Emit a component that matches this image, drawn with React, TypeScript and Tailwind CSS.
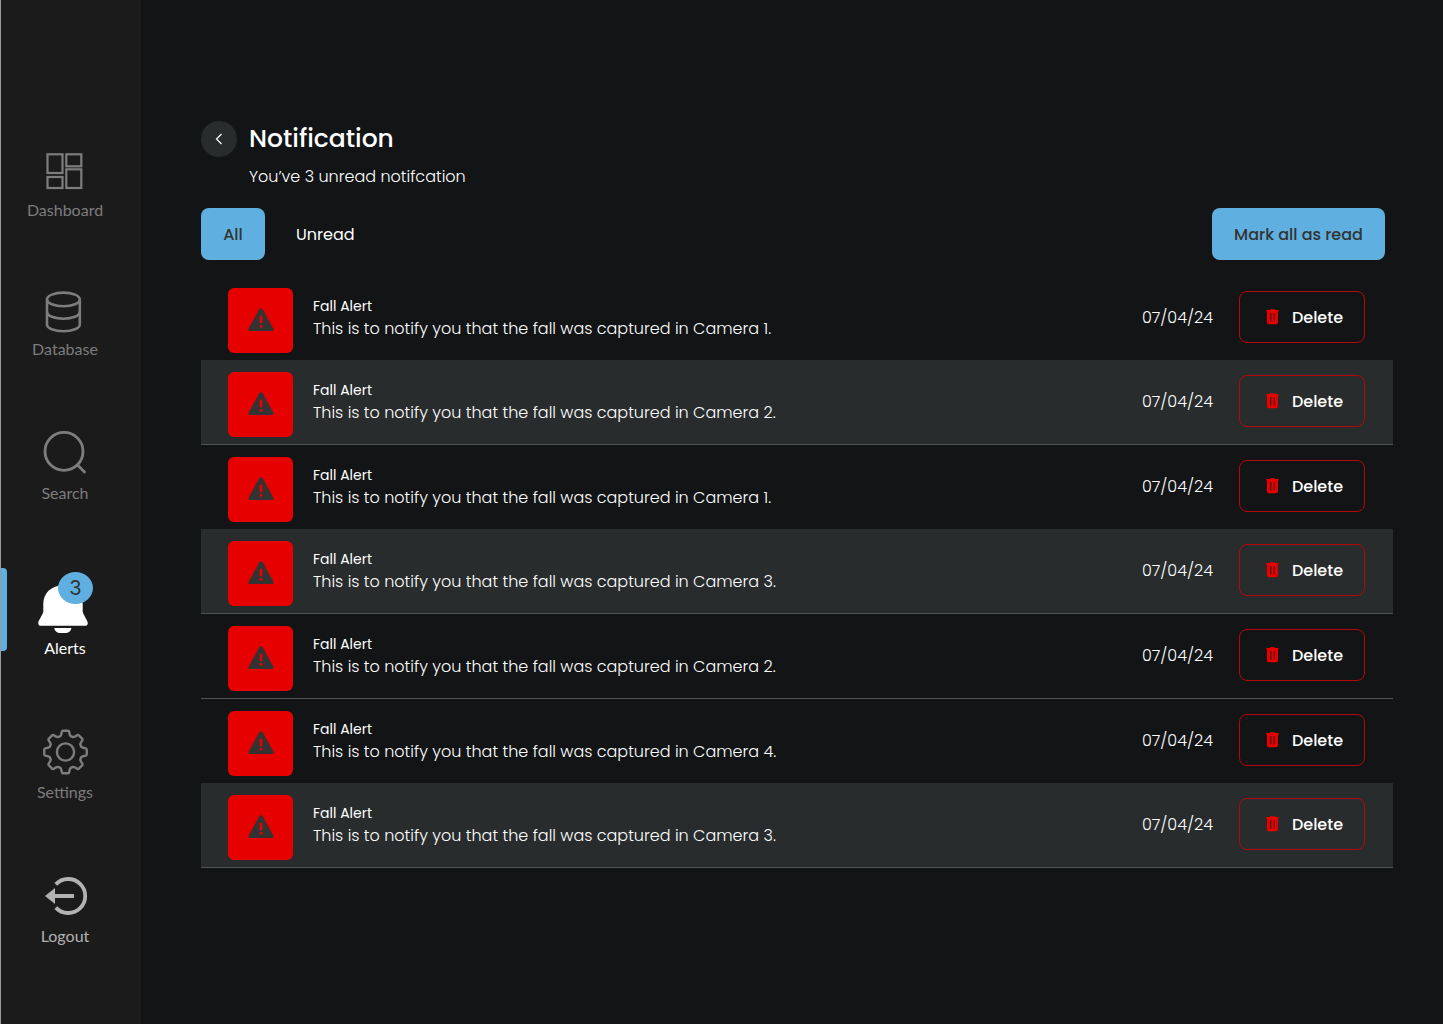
import React from "react";

type NavItem = { label: string; spacing: string; tone: string; icon: React.ReactNode; active?: boolean };

const TOOTH_ANGLES = [0, 45, 90, 135, 180, 225, 270, 315];

function gearPath(cx: number, cy: number) {
  const points = TOOTH_ANGLES.flatMap((angle) =>
    [
      [-18, 16.6],
      [-13.5, 18],
      [-10, 20.8],
      [-7, 21.4],
      [7, 21.4],
      [10, 20.8],
      [13.5, 18],
      [18, 16.6],
    ].map(([offset, radius]) => {
      const a = ((angle + offset - 90) * Math.PI) / 180;
      return `${(cx + radius * Math.cos(a)).toFixed(2)} ${(cy + radius * Math.sin(a)).toFixed(2)}`;
    }),
  );
  return `M${points.join("L")}Z`;
}

function Icon({ children }: { children: React.ReactNode }) {
  return (
    <svg width="56" height="56" viewBox="0 0 56 56" fill="none" stroke="currentColor" aria-hidden="true">
      {children}
    </svg>
  );
}

const navItems: NavItem[] = [
  {
    label: "Dashboard",
    spacing: "",
    tone: "text-[#7d7d7d]",
    icon: (
      <Icon>
        <g strokeWidth="2.2">
          <rect x="10.5" y="12.3" width="15" height="18.7" />
          <rect x="29.3" y="12.3" width="15" height="12" />
          <rect x="10.5" y="35" width="15" height="11" />
          <rect x="29.3" y="27.3" width="15" height="18.7" />
        </g>
      </Icon>
    ),
  },
  {
    label: "Database",
    spacing: "mt-[59px]",
    tone: "text-[#7d7d7d]",
    icon: (
      <Icon>
        <g strokeWidth="2.6">
          <ellipse cx="26.4" cy="18.4" rx="16.4" ry="6.8" />
          <path d="M10 18.4V43.5C10 47.3 17.3 50.3 26.4 50.3S42.8 47.3 42.8 43.5V18.4" />
          <path d="M10 31C10 34.8 17.3 37.7 26.4 37.7S42.8 34.8 42.8 31" />
        </g>
      </Icon>
    ),
  },
  {
    label: "Search",
    spacing: "mt-16",
    tone: "text-[#7d7d7d]",
    icon: (
      <Icon>
        <g strokeWidth="2.8" strokeLinecap="round">
          <circle cx="27" cy="26.4" r="19" />
          <path d="M40.5 40L47.5 47" />
        </g>
      </Icon>
    ),
  },
  {
    label: "Alerts",
    spacing: "mt-[75px]",
    tone: "text-white",
    active: true,
    icon: (
      <Icon>
        <g fill="currentColor" stroke="none">
          <path d="M6.3 24C6.3 12.8 14.5 5.5 26 5.5S45.7 12.8 45.7 24V31.5C45.7 34 50.8 40.5 50.8 43C50.8 45 49.6 45.8 48 45.8H4C2.4 45.8 1.2 45 1.2 43C1.2 40.5 6.3 34 6.3 31.5Z" />
          <path d="M17.3 48H34.3C34 51.3 31.2 53 28.5 53H23.2C20.4 53 17.7 51.3 17.3 48Z" />
        </g>
      </Icon>
    ),
  },
  {
    label: "Settings",
    spacing: "mt-16",
    tone: "text-[#7d7d7d]",
    icon: (
      <Icon>
        <g strokeWidth="2.4" strokeLinejoin="round">
          <path d={gearPath(28.5, 28)} />
          <circle cx="28.5" cy="28" r="8.6" />
        </g>
      </Icon>
    ),
  },
  {
    label: "Logout",
    spacing: "mt-16",
    tone: "text-[#b2b2b2]",
    icon: (
      <Icon>
        <path d="M18.8 16.4A17 17 0 1 1 18.8 39.6" strokeWidth="3.8" />
        <path d="M8 28L18 20V26H37V30H18V36Z" fill="currentColor" stroke="none" />
      </Icon>
    ),
  },
];

function Sidebar() {
  return (
    <nav aria-label="Main" className="w-[141px] shrink-0 border-l border-[#9a9a9a] bg-[#1b1b1b] pt-[142px] pr-3 font-['Lato',sans-serif]">
      <ul>
        {navItems.map((item) => (
          <li key={item.label} className={`relative ${item.spacing}`}>
            {item.active && <span className="absolute -top-3 left-0 h-[83px] w-1.5 rounded-r bg-[#5fb0e0]" />}
            <a href="#" aria-current={item.active ? "page" : undefined} className={`flex flex-col items-center ${item.tone}`}>
              <span className="relative">
                {item.icon}
                {item.active && (
                  <span className="absolute -top-2 left-[21px] flex h-8 w-[35px] items-center justify-center rounded-[50%] bg-[#5fb0e0] font-['Inter',sans-serif] text-xl text-[#333]">
                    3
                  </span>
                )}
              </span>
              <span className="text-base leading-6">{item.label}</span>
            </a>
          </li>
        ))}
      </ul>
    </nav>
  );
}

function WarningIcon() {
  return (
    <svg width="26" height="26" viewBox="0 0 26 26" aria-hidden="true">
      <path
        fill="#333"
        fillRule="evenodd"
        d="M11.3 1.2C12 0 14 0 14.7 1.2L25.3 20.4C26 21.6 25.3 23 24 23H2C.7 23 0 21.6.7 20.4ZM13 7.6C12.2 7.6 11.6 8.2 11.6 9V14.2C11.6 15 12.2 15.6 13 15.6S14.4 15 14.4 14.2V9C14.4 8.2 13.8 7.6 13 7.6ZM13 16.7A1.5 1.5 0 1 0 13 19.7A1.5 1.5 0 1 0 13 16.7Z"
      />
    </svg>
  );
}

function TrashIcon() {
  return (
    <svg width="13" height="16" viewBox="0 0 13 16" fill="#e60000" aria-hidden="true">
      <path d="M4 .3H9V1.1H12.7V2.6H12V13.6Q12 15.3 10.3 15.3H2.7Q1 15.3 1 13.6V2.6H.3V1.1H4Z" />
      <path d="M4 4H5.4V12.6H4ZM7.6 4H9V12.6H7.6Z" fill="#5c0d0e" />
    </svg>
  );
}

const alerts = [
  { camera: 1, row: "" },
  { camera: 2, row: "bg-[#282c2d] border-b" },
  { camera: 1, row: "" },
  { camera: 3, row: "bg-[#282c2d] border-b" },
  { camera: 2, row: "border-b" },
  { camera: 4, row: "" },
  { camera: 3, row: "bg-[#282c2d] border-b" },
];

export default function App() {
  return (
    <div className="flex min-h-screen bg-[#121416] font-['Poppins','Inter',sans-serif] text-white">
      <Sidebar />
      <main className="min-w-0 flex-1 pt-[121px] pr-[50px] pl-[60px]">
        <header className="flex items-start gap-3">
          <button aria-label="Back" className="flex size-9 items-center justify-center rounded-full bg-[#282c2d]">
            <svg width="8" height="12" viewBox="0 0 8 12" fill="none" stroke="currentColor" strokeWidth="1.2" aria-hidden="true">
              <path d="M6.5 1L1.5 6L6.5 11" />
            </svg>
          </button>
          <div>
            <h1 className="text-[25px] leading-9 font-medium">Notification</h1>
            <p className="mt-2 text-base leading-6 font-light">You’ve 3 unread notifcation</p>
          </div>
        </header>

        <div className="mt-[19px] mr-2 flex items-center">
          <button className="h-[52px] w-16 rounded-lg bg-[#5fb0e0] pt-0.5 text-base font-medium text-[#333]">All</button>
          <button className="ml-2 h-[52px] px-[23px] pt-0.5 text-base">Unread</button>
          <button className="ml-auto h-[52px] w-[173px] rounded-lg bg-[#5fb0e0] pt-0.5 text-base font-medium text-[#333]">
            Mark all as read
          </button>
        </div>

        <ul className="mt-4">
          {alerts.map((alert, index) => (
            <li key={index} className={`flex items-start border-[#515455] pt-3 pr-7 pb-[7px] pl-[27px] ${alert.row}`}>
              <div className="flex size-[65px] shrink-0 items-center justify-center rounded-md bg-[#e60000]">
                <WarningIcon />
              </div>
              <div className="ml-5 min-w-0 flex-1 pt-2">
                <h2 className="text-sm leading-5">Fall Alert</h2>
                <p className="text-base leading-[26px] font-light">
                  This is to notify you that the fall was captured in Camera {alert.camera}.
                </p>
              </div>
              <div className="flex items-center gap-[26px] pt-[3px]">
                <time dateTime="2024-04-07" className="pt-0.5 text-base leading-6 font-light">
                  07/04/24
                </time>
                <button className="flex h-[52px] w-[126px] items-center justify-center gap-[13px] rounded-lg border border-[#b5080a] pl-[5px] text-base font-medium">
                  <TrashIcon />
                  <span className="pt-0.5">Delete</span>
                </button>
              </div>
            </li>
          ))}
        </ul>
      </main>
    </div>
  );
}
